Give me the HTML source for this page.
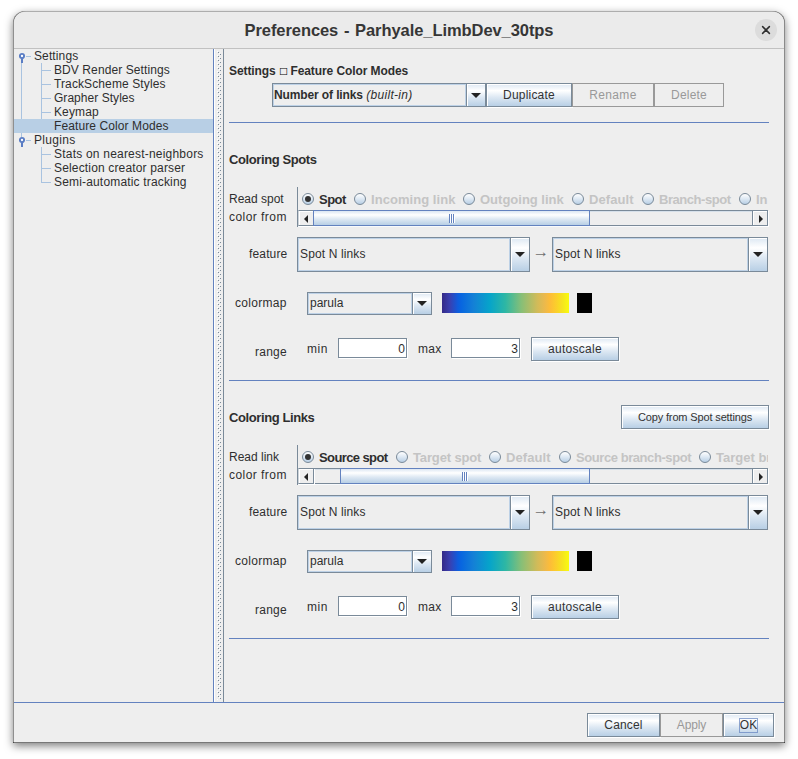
<!DOCTYPE html>
<html><head><meta charset="utf-8"><title>Preferences - Parhyale_LimbDev_30tps</title>
<style>
html,body{margin:0;padding:0;background:#fff;}
body{width:798px;height:759px;position:relative;overflow:hidden;font-family:"Liberation Sans",sans-serif;font-size:12px;color:#2e2e2e;}
.win{position:absolute;left:13px;top:11px;width:772px;height:732px;box-sizing:border-box;background:#eee;border-radius:12px 12px 0 0;box-shadow:inset 0 1px 0 rgba(0,0,0,.27),inset 1px 0 0 rgba(0,0,0,.4),inset -1px 0 0 rgba(0,0,0,.42),inset 0 -1px 0 rgba(0,0,0,.5),0 3px 9px rgba(0,0,0,.5);}
.tb{position:absolute;left:14px;top:12px;width:770px;height:36px;background:#ebebeb;border-radius:11px 11px 0 0;}
.tbl{position:absolute;left:14px;top:48px;width:770px;height:1px;background:#c1c1c1;}
.title{position:absolute;left:13px;top:12px;width:772px;height:36px;line-height:36px;text-align:center;font-weight:bold;font-size:16.5px;color:#363636;white-space:nowrap;word-spacing:1.2px;letter-spacing:-0.07px;}
.close{position:absolute;left:755px;top:19px;width:22px;height:22px;border-radius:11px;background:#dcdcdc;}
.t{position:absolute;white-space:nowrap;line-height:15px;}
.b{font-weight:bold;}
.dis{color:#c4c4c4;}
.arrow{font-size:16.5px;color:#6e6e6e;}
.sq{font:bold 9.5px "DejaVu Sans",sans-serif;color:#000;position:relative;top:-1.5px;margin:0 -0.6px 0 0;}
.sep{position:absolute;height:1px;background:#6382bf;}
.btn{position:absolute;box-sizing:border-box;border:1px solid #7a8a99;text-align:center;line-height:22px;white-space:nowrap;color:#333;
 background:linear-gradient(#dde8f3 0%,#fff 30%,#fff 30%,#dde8f3 60%,#b8cfe5 100%);box-shadow:inset 1px 1px 0 #fff,1px 1px 0 #fff;}
.btn.off{background:#eee;color:#999;box-shadow:none;border-color:#999;}
.combo{position:absolute;box-sizing:border-box;border:1px solid #7a8a99;background:#eee;box-shadow:inset 0 0 0 1px #bdd1e6;}
.combo span{position:absolute;left:3px;white-space:nowrap;line-height:14px;}
.combo b{position:absolute;right:0;top:0;bottom:0;width:18px;border-left:1px solid #7a8a99;box-shadow:inset 1px 1px 0 #fff,-1px 0 0 0 #bdd1e6;
 background:linear-gradient(#dde8f3 0%,#fff 30%,#dde8f3 60%,#b8cfe5 100%);}
.ad{position:absolute;left:50%;margin:0 0 0 -5px;width:0;height:0;border-left:5px solid transparent;border-right:5px solid transparent;border-top:5px solid #222;}
.tf{position:absolute;box-sizing:border-box;width:69px;height:20px;border:1px solid #7a8a99;background:#fff;text-align:right;padding-right:1px;line-height:20px;box-shadow:1px 1px 0 #fff;}
.cbar{position:absolute;width:127px;height:20px;background:linear-gradient(90deg,#352a87 0%,#3a3fb0 6%,#0f5cdd 12.5%,#0866e0 15%,#1481d6 25%,#06a4ca 37.5%,#2eb7a4 50%,#87bf77 62.5%,#d1bb59 75%,#ecb94c 81%,#fdbc38 85%,#fbcf2b 90%,#f5e51e 95%,#f9fb0e 100%);}
.spb{position:absolute;width:1px;background:#7a8a99;}
.clip{position:absolute;overflow:hidden;}
.radio{position:absolute;width:12px;height:12px;box-sizing:border-box;border-radius:6px;border:1px solid #7a8a99;background:linear-gradient(#fff 0%,#dde8f3 50%,#b8cfe5 100%);}
.radio.sel:after{content:"";position:absolute;left:2px;top:2px;width:6px;height:6px;border-radius:3px;background:#333;}
.sbtrack{position:absolute;height:16px;box-sizing:border-box;border-top:1px solid #7a8a99;border-bottom:1px solid #7a8a99;background:#eee;box-shadow:inset 0 1px 0 #d6e0ea,0 1px 0 #f8fafc;}
.sbbtn{position:absolute;width:16px;height:16px;box-sizing:border-box;border:1px solid #7a8a99;background:#eee;box-shadow:inset 1px 1px 0 #fff,1px 1px 0 #fff;}
.sbbtn.l{border-left-color:#cdd3d9;}
.al{position:absolute;left:5px;top:4px;width:0;height:0;border-top:4px solid transparent;border-bottom:4px solid transparent;border-right:4px solid #222;}
.ar{position:absolute;left:6px;top:4px;width:0;height:0;border-top:4px solid transparent;border-bottom:4px solid transparent;border-left:4px solid #222;}
.sbthumb{position:absolute;height:16px;box-sizing:border-box;border:1px solid #6382bf;background:linear-gradient(#dce7f3 0%,#fff 28%,#dde8f3 58%,#b8cfe5 100%);}
.sbthumb i{position:absolute;left:50%;top:3px;margin-left:-3px;width:6px;height:9px;background:linear-gradient(90deg,#6382bf 1px,#fff 1px,#fff 2px,#6382bf 2px,#6382bf 3px,#fff 3px,#fff 4px,#6382bf 4px,#6382bf 5px,#fff 5px);}
</style></head><body>
<div class="win"></div>
<div class="tb"></div><div class="tbl"></div>
<div class="title">Preferences - Parhyale_LimbDev_30tps</div>
<div class="close"><svg width="22" height="22" viewBox="0 0 22 22"><path d="M7.6 7.6L14.4 14.4M14.4 7.6L7.6 14.4" stroke="#2e2e2e" stroke-width="1.5" stroke-linecap="round"/></svg></div>
<!-- tree -->
<div style="position:absolute;left:14px;top:119px;width:199px;height:14px;background:#b8cfe5"></div>
<svg style="position:absolute;left:14px;top:49px" width="60" height="145" viewBox="14 49 60 145" shape-rendering="crispEdges"><g stroke="#a9c3e0" stroke-width="1" fill="none"><path d="M21.5 62V119M21.5 133V137M26 56.5H31M26 140.5H31"/><path d="M41.5 63V119M41 70.5H51M41 84.5H51M41 98.5H51M41 112.5H51"/><path d="M41.5 147V183M41 154.5H51M41 168.5H51M41 182.5H51"/></g></svg>
<svg style="position:absolute;left:17px;top:52px" width="10" height="12" viewBox="0 0 10 12"><circle cx="5" cy="4" r="2.1" fill="#fff" stroke="#5a7dc4" stroke-width="1.9"/><path d="M5 6.5V11" stroke="#5a7dc4" stroke-width="2"/></svg>
<svg style="position:absolute;left:17px;top:136px" width="10" height="12" viewBox="0 0 10 12"><circle cx="5" cy="4" r="2.1" fill="#fff" stroke="#5a7dc4" stroke-width="1.9"/><path d="M5 6.5V11" stroke="#5a7dc4" stroke-width="2"/></svg>
<div class="t " style="left:34px;top:49px;letter-spacing:0.12px;line-height:14px">Settings</div>
<div class="t " style="left:54px;top:63px;letter-spacing:0.09px;line-height:14px">BDV Render Settings</div>
<div class="t " style="left:54px;top:77px;letter-spacing:0.11px;line-height:14px">TrackScheme Styles</div>
<div class="t " style="left:54px;top:91px;letter-spacing:0.04px;line-height:14px">Grapher Styles</div>
<div class="t " style="left:54px;top:105px;letter-spacing:0.12px;line-height:14px">Keymap</div>
<div class="t " style="left:54px;top:119px;letter-spacing:0.1px;line-height:14px">Feature Color Modes</div>
<div class="t " style="left:34px;top:133px;letter-spacing:0.3px;line-height:14px">Plugins</div>
<div class="t " style="left:54px;top:147px;letter-spacing:0.21px;line-height:14px">Stats on nearest-neighbors</div>
<div class="t " style="left:54px;top:161px;letter-spacing:0.16px;line-height:14px">Selection creator parser</div>
<div class="t " style="left:54px;top:175px;letter-spacing:0.17px;line-height:14px">Semi-automatic tracking</div>
<!-- divider -->
<div style="position:absolute;left:213px;top:49px;width:1px;height:653px;background:#6382bf"></div>
<div style="position:absolute;left:214px;top:49px;width:1px;height:653px;background:#fff"></div>
<div style="position:absolute;left:223px;top:49px;width:1px;height:653px;background:#7a8a99"></div>
<svg style="position:absolute;left:215px;top:49px" width="8" height="653"><defs><pattern id="bp" x="0" y="0" width="4" height="4" patternUnits="userSpaceOnUse"><rect x="0" y="0" width="1" height="1" fill="#fff"/><rect x="1" y="1" width="1" height="1" fill="#7a8a99"/><rect x="2" y="2" width="1" height="1" fill="#fff"/><rect x="3" y="3" width="1" height="1" fill="#7a8a99"/></pattern></defs><rect x="2" y="2" width="4" height="649" fill="url(#bp)" shape-rendering="crispEdges"/></svg>
<!-- header -->
<div class="t b" style="left:229px;top:64px;letter-spacing:-0.09px">Settings <span class="sq">&#9633;</span> Feature Color Modes</div>
<div class="combo" style="left:272px;top:83px;width:214px;height:24px"><span style="top:4px;left:1px"><span style="position:static;font-weight:bold;letter-spacing:-0.12px">Number of links</span> <span style="position:static;font-style:italic;letter-spacing:.3px">(built-in)</span></span><b><i class="ad" style="top:9px"></i></b></div>
<div class="btn" style="left:486px;top:83px;width:86px;height:24px;letter-spacing:.2px">Duplicate</div>
<div class="btn off" style="left:572px;top:83px;width:82px;height:24px;letter-spacing:.35px">Rename</div>
<div class="btn off" style="left:654px;top:83px;width:70px;height:24px;letter-spacing:.2px">Delete</div>
<div class="sep" style="left:229px;top:122px;width:540px"></div>
<div class="t b" style="left:229px;top:152px;letter-spacing:-0.4px;font-size:13px;">Coloring Spots</div>

<div class="t " style="left:229px;top:192px;letter-spacing:0px;">Read spot</div>
<div class="t " style="left:229px;top:209.5px;letter-spacing:0.45px;">color from</div>
<div class="spb" style="left:297px;top:187px;height:40px"></div>
<div class="clip" style="left:298px;top:187px;width:470px;height:24px">
<div class="radio sel" style="left:4px;top:6px"></div>
<div class="t b" style="left:21px;top:5px;letter-spacing:-0.5px;font-size:13px;">Spot</div>
<div class="radio" style="left:56px;top:6px"></div>
<div class="t b dis" style="left:73px;top:5px;letter-spacing:0.05px;font-size:13px;">Incoming link</div>
<div class="radio" style="left:165px;top:6px"></div>
<div class="t b dis" style="left:182px;top:5px;letter-spacing:0px;font-size:13px;">Outgoing link</div>
<div class="radio" style="left:274px;top:6px"></div>
<div class="t b dis" style="left:291px;top:5px;letter-spacing:0.1px;font-size:13px;">Default</div>
<div class="radio" style="left:344px;top:6px"></div>
<div class="t b dis" style="left:361px;top:5px;letter-spacing:-0.45px;font-size:13px;">Branch-spot</div>
<div class="radio" style="left:441px;top:6px"></div>
<div class="t b dis" style="left:458px;top:5px;letter-spacing:0px;font-size:13px;">In</div>
</div>
<div class="sbtrack" style="left:298px;top:210px;width:470px"></div>
<div class="sbbtn l" style="left:298px;top:210px"><i class="al"></i></div>
<div class="sbbtn" style="left:752px;top:210px"><i class="ar"></i></div>
<div class="sbthumb" style="left:313px;top:210px;width:277px"><i></i></div>
<div class="t " style="left:249px;top:247px;letter-spacing:0.15px;">feature</div>
<div class="combo" style="left:297px;top:237px;width:233px;height:35px"><span style="top:9px;left:2px;letter-spacing:.125px">Spot N links</span><b><i class="ad" style="top:14px"></i></b></div>
<div class="t arrow" style="left:532.5px;top:243.5px;">&#8594;</div>
<div class="combo" style="left:552px;top:237px;width:216px;height:35px"><span style="top:9px;left:2px;letter-spacing:.125px">Spot N links</span><b><i class="ad" style="top:14px"></i></b></div>
<div class="t " style="left:235px;top:296px;letter-spacing:0.29px;">colormap</div>
<div class="combo" style="left:307px;top:292px;width:125px;height:23px"><span style="top:3px;left:2px">parula</span><b><i class="ad" style="top:8px"></i></b></div>
<div class="cbar" style="left:442px;top:293px"></div>
<div style="position:absolute;background:#000;left:577px;top:293px;width:15px;height:20px"></div>
<div class="t " style="left:255px;top:345px;letter-spacing:0.26px;">range</div>
<div class="t " style="left:307px;top:342px;letter-spacing:0.5px;">min</div>
<div class="tf" style="left:338px;top:338px">0</div>
<div class="t " style="left:418px;top:342px;letter-spacing:0.3px;">max</div>
<div class="tf" style="left:451px;top:338px">3</div>
<div class="btn" style="left:531px;top:337px;width:88px;height:24px;letter-spacing:.29px">autoscale</div>
<div class="sep" style="left:229px;top:380px;width:540px"></div>
<div class="t b" style="left:229px;top:410px;letter-spacing:-0.4px;font-size:13px;">Coloring Links</div>
<div class="btn" style="left:621px;top:405px;width:148px;height:24px;font-size:11px;line-height:22px;letter-spacing:-0.14px">Copy from Spot settings</div>
<div class="t " style="left:229px;top:450px;letter-spacing:0px;">Read link</div>
<div class="t " style="left:229px;top:467.5px;letter-spacing:0.45px;">color from</div>
<div class="spb" style="left:297px;top:445px;height:40px"></div>
<div class="clip" style="left:298px;top:445px;width:470px;height:24px">
<div class="radio sel" style="left:4px;top:6px"></div>
<div class="t b" style="left:21px;top:5px;letter-spacing:-0.6px;font-size:13px;">Source spot</div>
<div class="radio" style="left:98px;top:6px"></div>
<div class="t b dis" style="left:115px;top:5px;letter-spacing:-0.14px;font-size:13px;">Target spot</div>
<div class="radio" style="left:191px;top:6px"></div>
<div class="t b dis" style="left:208px;top:5px;letter-spacing:0.1px;font-size:13px;">Default</div>
<div class="radio" style="left:261px;top:6px"></div>
<div class="t b dis" style="left:278px;top:5px;letter-spacing:-0.43px;font-size:13px;">Source branch-spot</div>
<div class="radio" style="left:401px;top:6px"></div>
<div class="t b dis" style="left:418px;top:5px;letter-spacing:0px;font-size:13px;">Target br</div>
</div>
<div class="sbtrack" style="left:298px;top:468px;width:470px"></div>
<div class="sbbtn l" style="left:298px;top:468px"><i class="al"></i></div>
<div class="sbbtn" style="left:752px;top:468px"><i class="ar"></i></div>
<div class="sbthumb" style="left:340px;top:468px;width:250px"><i></i></div>
<div class="t " style="left:249px;top:505px;letter-spacing:0.15px;">feature</div>
<div class="combo" style="left:297px;top:495px;width:233px;height:35px"><span style="top:9px;left:2px;letter-spacing:.125px">Spot N links</span><b><i class="ad" style="top:14px"></i></b></div>
<div class="t arrow" style="left:532.5px;top:501.5px;">&#8594;</div>
<div class="combo" style="left:552px;top:495px;width:216px;height:35px"><span style="top:9px;left:2px;letter-spacing:.125px">Spot N links</span><b><i class="ad" style="top:14px"></i></b></div>
<div class="t " style="left:235px;top:554px;letter-spacing:0.29px;">colormap</div>
<div class="combo" style="left:307px;top:550px;width:125px;height:23px"><span style="top:3px;left:2px">parula</span><b><i class="ad" style="top:8px"></i></b></div>
<div class="cbar" style="left:442px;top:551px"></div>
<div style="position:absolute;background:#000;left:577px;top:551px;width:15px;height:20px"></div>
<div class="t " style="left:255px;top:603px;letter-spacing:0.26px;">range</div>
<div class="t " style="left:307px;top:600px;letter-spacing:0.5px;">min</div>
<div class="tf" style="left:338px;top:596px">0</div>
<div class="t " style="left:418px;top:600px;letter-spacing:0.3px;">max</div>
<div class="tf" style="left:451px;top:596px">3</div>
<div class="btn" style="left:531px;top:595px;width:88px;height:24px;letter-spacing:.29px">autoscale</div>
<div class="sep" style="left:229px;top:638px;width:540px"></div>
<div class="sep" style="left:14px;top:702px;width:770px"></div>
<div class="btn" style="left:587px;top:713px;width:73px;height:24px;letter-spacing:.15px">Cancel</div>
<div class="btn off" style="left:660px;top:713px;width:63px;height:24px;letter-spacing:-.15px">Apply</div>
<div class="btn" style="left:723px;top:713px;width:51px;height:24px">OK</div>
<div style="position:absolute;left:739px;top:718px;width:19px;height:15px;box-sizing:border-box;border:1px solid #6382bf;opacity:.7"></div>
</body></html>
